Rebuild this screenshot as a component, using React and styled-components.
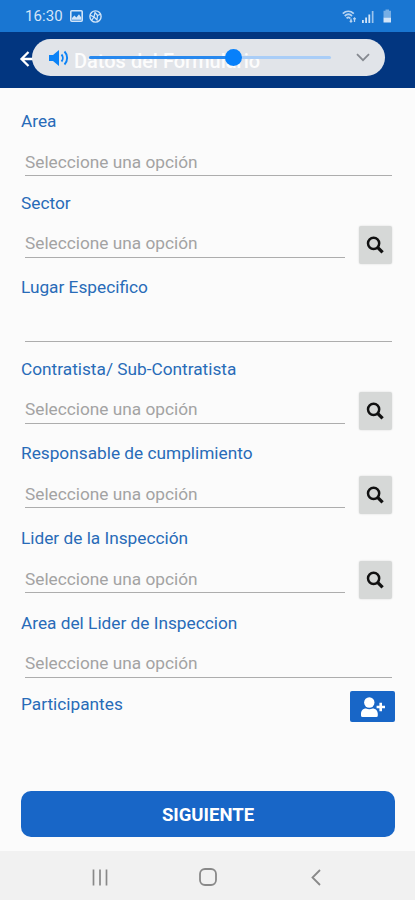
import { useState } from 'react'
import styled, { createGlobalStyle } from 'styled-components'

const GlobalStyle = createGlobalStyle`
  * {
    box-sizing: border-box;
  }
  body {
    margin: 0;
    background-color: #fbfbfb;
    font-family: Roboto, 'Liberation Sans', sans-serif;
  }
`

const Container = styled.div`
  width: 415px;
  height: 900px;
  display: flex;
  flex-direction: column;
  overflow: hidden;
  background-color: #fbfbfb;
`

const StatusBar = styled.div`
  height: 32px;
  flex-shrink: 0;
  display: flex;
  align-items: center;
  justify-content: space-between;
  padding: 0 22px 0 25px;
  background-color: #1976d2;
  color: #d3e5f8;
`

const StatusGroup = styled.div`
  display: flex;
  align-items: center;
  gap: ${(props) => props.$gap}px;
`

const Clock = styled.span`
  width: 39px;
  font-size: 15px;
  line-height: 32px;
  letter-spacing: 0.1px;
  white-space: nowrap;
`

const Header = styled.header`
  height: 56px;
  flex-shrink: 0;
  display: flex;
  align-items: center;
  position: relative;
  padding-left: 19px;
  background-color: #023680;
  color: #fff;
`

const Title = styled.h1`
  margin: 1px 0 0 36px;
  font-size: 20px;
  font-weight: 500;
  line-height: 24px;
  white-space: nowrap;
  position: relative;
  z-index: 1;
  opacity: 0.9;
`

const BackIcon = styled.svg`
  width: 19px;
  height: 16px;
  margin-bottom: 2px;
`

/* the system volume panel floats over the header */
const VolumePanel = styled.div`
  position: absolute;
  top: 7px;
  left: 32px;
  width: 353px;
  height: 37px;
  display: flex;
  align-items: center;
  padding: 0 14px 0 16px;
  border-radius: 19px;
  background-color: #e1e4e9;
`

const Track = styled.div`
  width: 242px;
  height: 3px;
  margin: 0 25px 0 19px;
  position: relative;
  z-index: 2;
  border-radius: 2px;
  background-color: #a9cdf7;
`

const TrackFill = styled.div`
  height: 100%;
  border-radius: 2px;
  background-color: #2788ee;
`

const Thumb = styled.div`
  width: 17px;
  height: 17px;
  position: absolute;
  top: -7px;
  margin-left: -9px;
  border-radius: 50%;
  background-color: #0780fa;
`

const Form = styled.main`
  flex: 1;
  display: flex;
  flex-direction: column;
  padding: 22px 20px 14px 21px;
`

const Field = styled.div`
  height: ${(props) => (props.$search ? '84.7px' : '81.5px')};
  flex-shrink: 0;
`

const Label = styled.div`
  height: 22px;
  font-size: 17.25px;
  line-height: 22px;
  color: #286bb8;
  white-space: nowrap;
`

const InputRow = styled.div`
  display: flex;
  align-items: flex-start;
  gap: 14px;
  padding: 12px 3.5px 0 4px;
`

const Input = styled.div`
  flex: 1;
  height: 32px;
  padding-top: 6.5px;
  border-bottom: 1.5px solid #adadad;
  font-size: 17.25px;
  line-height: 22px;
  color: #a3a3a3;
  white-space: nowrap;
`

const SearchButton = styled.button`
  width: 33px;
  height: 38px;
  display: flex;
  align-items: center;
  justify-content: center;
  padding: 0;
  border: 0;
  border-radius: 2px;
  background-color: #d6d8d7;
  box-shadow: 0 0 2px rgba(0, 0, 0, 0.15);
`

const Participants = styled.div`
  display: flex;
  align-items: flex-start;
  justify-content: space-between;
`

const AddButton = styled.button`
  width: 45px;
  height: 31px;
  display: flex;
  align-items: center;
  justify-content: center;
  margin-top: -2px;
  padding: 1px 0 0;
  border: 0;
  border-radius: 2px;
  background-color: #1866c7;
`

const NextButton = styled.button`
  width: 100%;
  height: 46px;
  margin-top: auto;
  padding: 2px 0 0;
  border: 0;
  border-radius: 10px;
  background-color: #1866c7;
  color: #fff;
  font-family: inherit;
  font-size: 18.5px;
  font-weight: 700;
  line-height: 44px;
`

const NavBar = styled.nav`
  height: 49px;
  flex-shrink: 0;
  display: flex;
  align-items: center;
  justify-content: space-between;
  padding: 3px 91px 0 92px;
  background-color: #f1f1f1;
`

const FIELDS = [
  { label: 'Area', placeholder: 'Seleccione una opción' },
  { label: 'Sector', placeholder: 'Seleccione una opción', search: true },
  { label: 'Lugar Especifico', placeholder: '' },
  { label: 'Contratista/ Sub-Contratista', placeholder: 'Seleccione una opción', search: true },
  { label: 'Responsable de cumplimiento', placeholder: 'Seleccione una opción', search: true },
  { label: 'Lider de la Inspección', placeholder: 'Seleccione una opción', search: true },
  { label: 'Area del Lider de Inspeccion', placeholder: 'Seleccione una opción' },
]

const SearchIcon = () => (
  <svg width='18' height='18' viewBox='0 0 18 18' fill='none' stroke='#111'>
    <circle cx='7.6' cy='7.3' r='5.6' strokeWidth='2.5' />
    <path d='M11.6 11.3L16.6 16.3' strokeWidth='3.2' />
  </svg>
)

const AddUserIcon = () => (
  <svg width='26' height='21' viewBox='0 0 26 21' fill='#fff'>
    <circle cx='9.3' cy='5.5' r='5.2' />
    <path d='M1 18.5V16.8C1 13.5 3 11.4 6 11.4C8 12.5 10.6 12.5 12.6 11.4C15.6 11.4 17.8 13.5 17.8 16.8V18.5Q17.8 20 16.3 20H2.5Q1 20 1 18.5Z' />
    <path d='M19.4 5.7H22V8.7H25V11.3H22V14.3H19.4V11.3H16.6V8.7H19.4Z' />
  </svg>
)

const App = () => {
  const [volume] = useState(60)

  return (
    <>
      <GlobalStyle />
      <Container>
        <StatusBar>
          <StatusGroup $gap={6}>
            <Clock>16:30</Clock>
            <svg width='13' height='12' viewBox='0 0 13 12'>
              <rect x='0.8' y='0.8' width='11.4' height='10.4' rx='1' fill='none' stroke='currentColor' strokeWidth='1.6' />
              <path d='M2 9.8V8L4.4 5.5L6.4 7.4L9 4.2L11.2 7.4V9.8Z' fill='currentColor' />
            </svg>
            <svg width='13' height='13' viewBox='0 0 13 13' fill='none' stroke='currentColor' strokeWidth='1.4'>
              <circle cx='6.5' cy='6.5' r='5.6' />
              <path d='M1 5L5 7L6 2.5L8.5 5.5L12 4M3 10L5 7L8 10L8.5 5.5' strokeWidth='1.2' />
            </svg>
          </StatusGroup>
          <StatusGroup $gap={5}>
            <svg width='15' height='13' viewBox='0 0 15 13' fill='none' stroke='currentColor' opacity='0.85'>
              <path d='M0.8 3.6C4 0.6 8.5 0.6 11.8 3.6M2.7 6C5 4 8 4 10 6M4.6 8.3C5.6 7.3 7.2 7.3 8.2 8.3' strokeWidth='1.8' />
              <path d='M9 8.5V12M7.8 10.8L9 12L10.2 10.8M12.5 12V8M11.3 9.2L12.5 8L13.7 9.2' strokeWidth='1.3' />
            </svg>
            <svg width='12' height='13' viewBox='0 0 12 13' fill='currentColor'>
              <path d='M0 10H1.8V13H0ZM3.2 7.5H5V13H3.2ZM6.4 4.5H8.2V13H6.4Z' />
              <path d='M9.8 1H11.5V13H9.8Z' opacity='0.7' />
            </svg>
            <svg width='14' height='14' viewBox='0 0 14 14' fill='currentColor'>
              <path d='M4.5 1.7H6.5V0.5H10V1.7H12V8.5H4.5Z' opacity='0.5' />
              <path d='M4.5 8.5H12V13.5H4.5Z' />
            </svg>
          </StatusGroup>
        </StatusBar>
        <Header>
          <BackIcon viewBox='0 0 19 16' fill='none' stroke='#fff' strokeWidth='2.3'>
            <path d='M9.5 1L2.5 8L9.5 15M2.5 8H19' />
          </BackIcon>
          <Title>Datos del Formulario</Title>
          <VolumePanel>
            <svg width='22' height='18' viewBox='0 0 22 18'>
              <path d='M1 6H5L11 1V17L5 12H1Z' fill='#0b82f6' />
              <path d='M13.5 5.5C15.2 7.4 15.2 10.6 13.5 12.5M16.5 2.5C20 6 20 12 16.5 15.5' fill='none' stroke='#0b82f6' strokeWidth='1.9' />
            </svg>
            <Track>
              <TrackFill style={{ width: `${volume}%` }} />
              <Thumb style={{ left: `${volume}%` }} />
            </Track>
            <svg width='14' height='9' viewBox='0 0 14 9' fill='none' stroke='#858990' strokeWidth='1.8'>
              <path d='M1 1.2L7 7.2L13 1.2' />
            </svg>
          </VolumePanel>
        </Header>
        <Form>
          {FIELDS.map((field) => (
            <Field key={field.label} $search={field.search}>
              <Label>{field.label}</Label>
              <InputRow>
                <Input>{field.placeholder}</Input>
                {field.search && (
                  <SearchButton aria-label='Buscar'>
                    <SearchIcon />
                  </SearchButton>
                )}
              </InputRow>
            </Field>
          ))}
          <Participants>
            <Label>Participantes</Label>
            <AddButton aria-label='Agregar'>
              <AddUserIcon />
            </AddButton>
          </Participants>
          <NextButton>SIGUIENTE</NextButton>
        </Form>
        <NavBar>
          <svg width='16' height='17' viewBox='0 0 16 17' stroke='#898989' strokeWidth='1.7'>
            <path d='M1.5 0.5V16.5M8 0.5V16.5M14.5 0.5V16.5' />
          </svg>
          <svg width='18' height='18' viewBox='0 0 18 18' fill='none' stroke='#898989' strokeWidth='1.8'>
            <rect x='1' y='1' width='16' height='16' rx='5' />
          </svg>
          <svg width='16' height='17' viewBox='0 0 16 17' fill='none' stroke='#898989' strokeWidth='1.8'>
            <path d='M12 1L4.5 8.5L12 16' />
          </svg>
        </NavBar>
      </Container>
    </>
  )
}

export default App
